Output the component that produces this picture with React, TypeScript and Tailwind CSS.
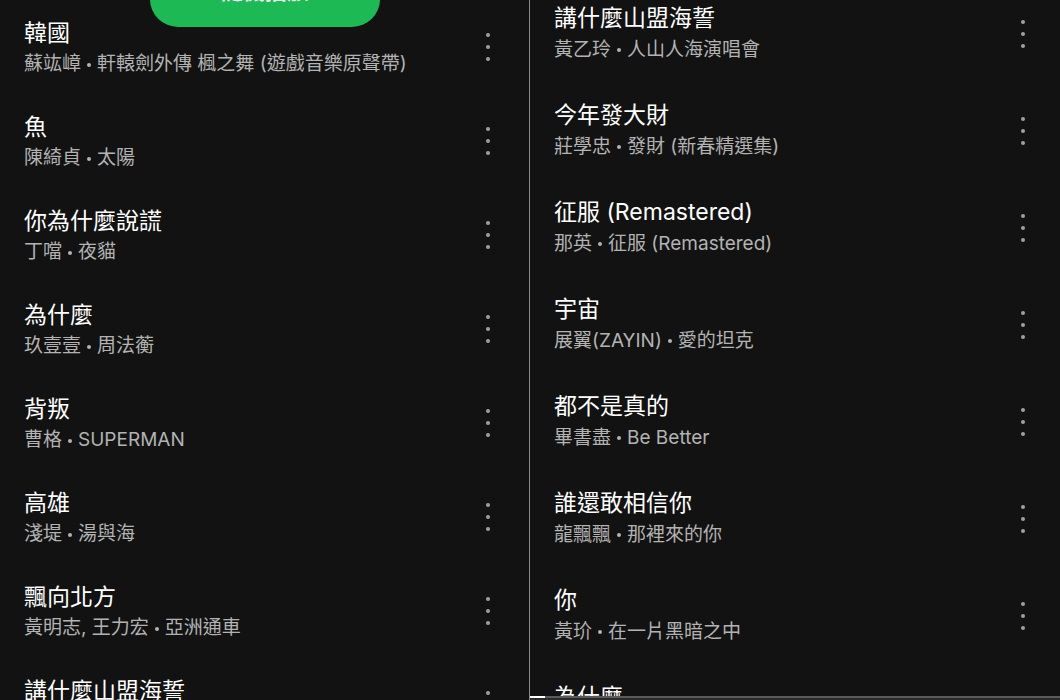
const leftTracks = [
  { title: "韓國", artist: "蘇竑嶂", album: "軒轅劍外傳 楓之舞 (遊戲音樂原聲帶)" },
  { title: "魚", artist: "陳綺貞", album: "太陽" },
  { title: "你為什麼說謊", artist: "丁噹", album: "夜貓" },
  { title: "為什麼", artist: "玖壹壹", album: "周法蘅" },
  { title: "背叛", artist: "曹格", album: "SUPERMAN" },
  { title: "高雄", artist: "淺堤", album: "湯與海" },
  { title: "飄向北方", artist: "黃明志, 王力宏", album: "亞洲通車" },
  { title: "講什麼山盟海誓", artist: "黃乙玲", album: "人山人海演唱會" },
];

const rightTracks = [
  { title: "講什麼山盟海誓", artist: "黃乙玲", album: "人山人海演唱會" },
  { title: "今年發大財", artist: "莊學忠", album: "發財 (新春精選集)" },
  { title: "征服 (Remastered)", artist: "那英", album: "征服 (Remastered)" },
  { title: "宇宙", artist: "展翼(ZAYIN)", album: "愛的坦克" },
  { title: "都不是真的", artist: "畢書盡", album: "Be Better" },
  { title: "誰還敢相信你", artist: "龍飄飄", album: "那裡來的你" },
  { title: "你", artist: "黃玠", album: "在一片黑暗之中" },
  { title: "為什麼", artist: "玖壹壹", album: "周法蘅" },
];

const font = { fontFamily: '"Inter", "Noto Sans CJK TC", sans-serif' };

type Track = { title: string; artist: string; album: string };

function MoreDots() {
  return (
    <div className="flex flex-col items-center gap-[8px]">
      <span className="block h-[4px] w-[4px] rounded-full bg-[#a0a0a0]" />
      <span className="block h-[4px] w-[4px] rounded-full bg-[#a0a0a0]" />
      <span className="block h-[4px] w-[4px] rounded-full bg-[#a0a0a0]" />
    </div>
  );
}

function TrackRow({ track, wide }: { track: Track; wide?: boolean }) {
  return (
    <div className={wide ? "flex h-[97px] shrink-0 items-center pl-[24px] pr-[35px]" : "flex h-[94px] shrink-0 items-center pl-[24px] pr-[39px]"}>
      <div className="min-w-0 flex-1">
        <p className={wide ? "truncate text-[23px] leading-[31px] text-white" : "truncate text-[23px] leading-[30px] text-white"}>
          {track.title}
        </p>
        <p className={wide ? "mt-[1px] truncate text-[19px] leading-[30px] text-[#b3b3b3]" : "mt-[1px] truncate text-[19px] leading-[29px] text-[#b3b3b3]"}>
          {track.artist}
          <span className="mx-[6px] inline-block h-[4px] w-[4px] rounded-full bg-[#b3b3b3] align-middle" />
          {track.album}
        </p>
      </div>
      <div className={wide ? "" : "-mt-[2px]"}>
        <MoreDots />
      </div>
    </div>
  );
}

export default function App() {
  return (
    <div className="flex h-[700px] w-[1060px] overflow-hidden bg-[#121212]" style={font}>
      {/* left screenshot */}
      <div className="relative flex h-full w-[530px] shrink-0 flex-col overflow-hidden border-r border-[#8a8a8a]">
        <div className="flex flex-col pt-[1px]">
          {leftTracks.map((t, i) => (
            <TrackRow key={i} track={t} />
          ))}
        </div>
        <div className="absolute left-[150px] top-[-29px] flex h-[56px] w-[230px] items-center justify-center rounded-full bg-[#1db954]">
          <span className="mb-[16px] text-[22px] font-bold leading-none text-white">隨機播放</span>
        </div>
      </div>

      {/* right screenshot */}
      <div className="flex h-full w-[530px] shrink-0 flex-col overflow-hidden">
        <div className="-mt-[15px] flex min-h-0 flex-1 flex-col overflow-hidden">
          {rightTracks.map((t, i) => (
            <TrackRow key={i} track={t} wide />
          ))}
        </div>
        <div className="h-[4px] shrink-0 bg-[#2a2a2a]">
          <div className="flex h-[2px] bg-[#5a5a5a]">
            <div className="h-full w-[15px] bg-white" />
          </div>
        </div>
      </div>
    </div>
  );
}
